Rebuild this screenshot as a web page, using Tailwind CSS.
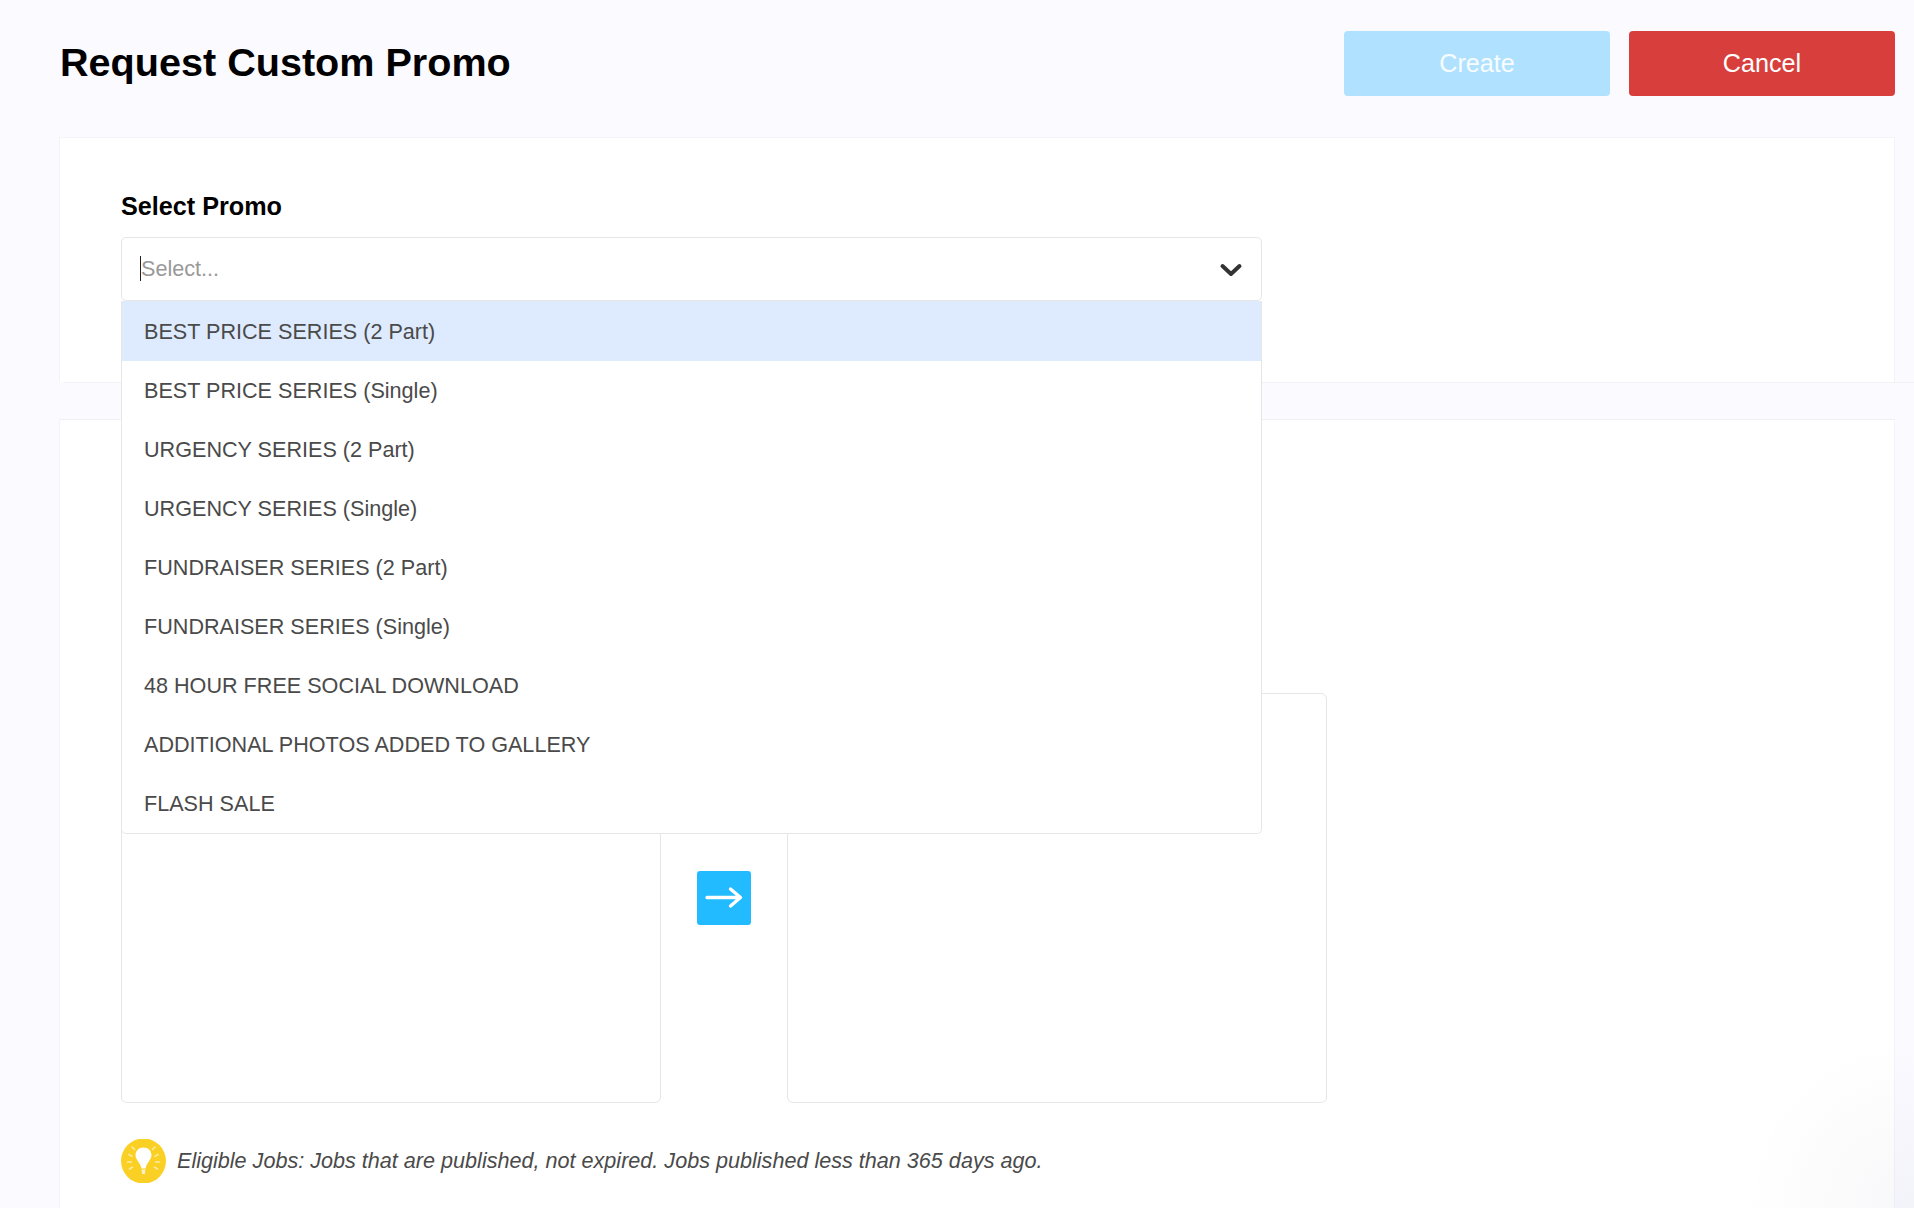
<!DOCTYPE html>
<html lang="en">
<head>
<meta charset="utf-8">
<title>Request Custom Promo</title>
<script src="https://cdn.jsdelivr.net/npm/@tailwindcss/browser@4"></script>
</head>
<body class="relative h-screen overflow-hidden bg-[#fafaff] font-['Liberation_Sans',Arial,sans-serif]">
    <!-- header -->
    <div class="flex items-center justify-between pl-[60px] pr-[19px] pt-[31px] pb-[41px]">
        <h1 class="text-[39.6px] leading-[63px] pb-[2px] font-bold text-black">Request Custom Promo</h1>
        <div class="flex gap-[19px]">
            <button class="w-[266px] h-[65px] rounded-[4px] bg-[#b0e1ff] text-[25.2px] text-white/90">Create</button>
            <button class="w-[266px] h-[65px] rounded-[4px] bg-[#d83f3c] text-[25.2px] text-white">Cancel</button>
        </div>
    </div>

    <!-- select promo card -->
    <div class="ml-[59px] mr-[19px] h-[245px] border border-b-0 border-[#f3f3f9] bg-white pl-[61px] pt-[52px]">
        <label class="block text-[25.2px] leading-[33px] font-bold text-black mb-[14px]">Select Promo</label>
        <div class="relative w-[1141px]">
            <div class="flex items-center justify-between h-[64px] rounded-[5px] border border-[#e6e6e6] bg-white pl-[18px] pr-[18px]">
                <div class="flex items-center">
                    <span class="w-[1px] h-[25px] bg-[#222]"></span>
                    <span class="text-[21.6px] text-[#999]">Select...</span>
                </div>
                <svg width="24" height="16" viewBox="0 0 24 16" fill="none" stroke="#333" stroke-width="4" stroke-linecap="round" stroke-linejoin="round">
                    <path d="M3.500 5l8.500 8 8.500-8" />
                </svg>
            </div>
            <!-- menu is open over the card below -->
            <ul class="absolute z-10 top-full left-0 w-full rounded-b-[5px] border border-t-0 border-[#e6e6e6] bg-white text-[21.6px] text-[#4a4a4a]">
                <li class="flex items-center h-[60px] pl-[22px] pt-[3px] bg-[#deebff]">BEST PRICE SERIES (2 Part)</li>
                <li class="flex items-center h-[59px] pl-[22px] pt-[2px]">BEST PRICE SERIES (Single)</li>
                <li class="flex items-center h-[59px] pl-[22px] pt-[2px]">URGENCY SERIES (2 Part)</li>
                <li class="flex items-center h-[59px] pl-[22px] pt-[2px]">URGENCY SERIES (Single)</li>
                <li class="flex items-center h-[59px] pl-[22px] pt-[2px]">FUNDRAISER SERIES (2 Part)</li>
                <li class="flex items-center h-[59px] pl-[22px] pt-[2px]">FUNDRAISER SERIES (Single)</li>
                <li class="flex items-center h-[59px] pl-[22px] pt-[2px]">48 HOUR FREE SOCIAL DOWNLOAD</li>
                <li class="flex items-center h-[59px] pl-[22px] pt-[2px]">ADDITIONAL PHOTOS ADDED TO GALLERY</li>
                <li class="flex items-center h-[59px] pl-[22px] pt-[2px]">FLASH SALE</li>
            </ul>
        </div>
    </div>

    <!-- divider under the first card runs out to the page edge -->
    <div class="ml-[64px] border-t border-[#f1f1f5]"></div>

    <!-- job picker card -->
    <div class="mt-[36px] ml-[59px] mr-[19px] h-[900px] border border-[#f3f3f9] border-t-[#f0f0f4] bg-white pl-[61px] pt-[273px]">
        <div class="flex items-center">
            <div class="w-[540px] h-[410px] rounded-[6px] border border-[#e6e6e6]"></div>
            <div class="w-[126px] flex justify-center">
                <button class="flex items-center justify-center w-[54px] h-[54px] rounded-[3px] bg-[#22bbff]">
                    <svg width="54" height="54" viewBox="0 0 54 54" fill="none" stroke="#fff" stroke-width="3.4" stroke-linecap="round" stroke-linejoin="round">
                        <path d="M10 26.500h33M33.500 18l10 8.500-10 8.500" />
                    </svg>
                </button>
            </div>
            <div class="w-[540px] h-[410px] rounded-[6px] border border-[#e6e6e6]"></div>
        </div>
        <div class="flex items-center mt-[36px]">
            <svg width="45" height="44" viewBox="0 0 45 44" class="shrink-0">
                <circle cx="22.500" cy="22" r="22.500" fill="#fbd024" />
                <path d="M22.500 8.500c-4.800 0-8 3.500-8 7.800 0 4.500 4.600 6.800 6 13.200h4c1.400-6.400 6-8.700 6-13.200 0-4.300-3.200-7.800-8-7.800z" fill="#fff" />
                <path d="M20.500 30.500h4l-.6 4.500h-2.800z" fill="#fff" fill-opacity=".75" />
                <path d="M8 15.500l3 1.800M6.500 23h4M8.500 30l3-1.800M37 15.500l-3 1.800M38.500 23h-4M36.500 30l-3-1.800M11 8l2.500 2.500M34 8l-2.500 2.500" stroke="#fff" stroke-opacity=".6" stroke-width="1.500" stroke-linecap="round" />
            </svg>
            <p class="ml-[11px] text-[21.6px] italic text-[#4a4a4a]">Eligible Jobs: Jobs that are published, not expired. Jobs published less than 365 days ago.</p>
        </div>
    </div>

    <!-- faint shade in the bottom right corner -->
    <div class="absolute bottom-0 right-0 w-[170px] h-[170px] pointer-events-none bg-[radial-gradient(circle_at_100%_100%,rgba(110,110,150,0.05),transparent_70%)]"></div>
</body>
</html>
